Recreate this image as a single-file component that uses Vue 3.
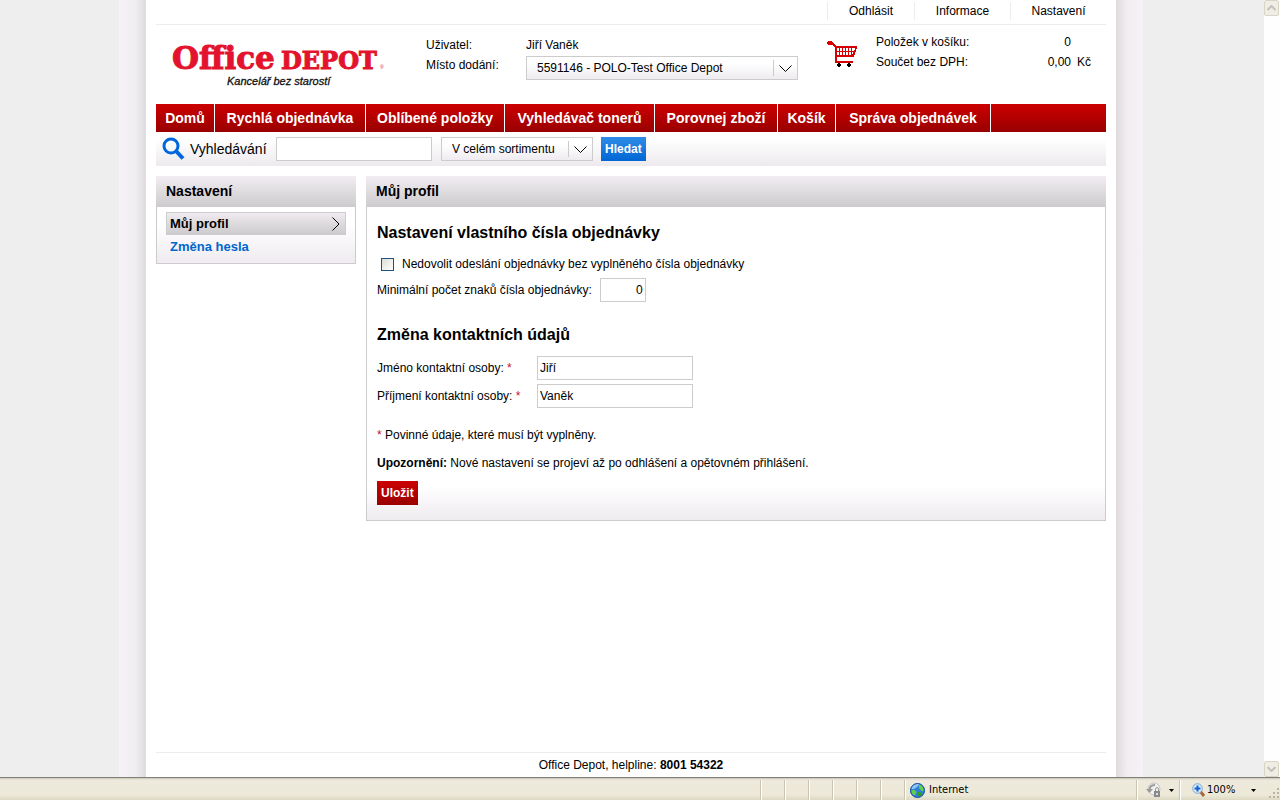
<script setup>
import { ref } from 'vue'

const topLinks = ['Odhlásit', 'Informace', 'Nastavení']
const menu = [
  'Domů',
  'Rychlá objednávka',
  'Oblíbené položky',
  'Vyhledávač tonerů',
  'Porovnej zboží',
  'Košík',
  'Správa objednávek',
]
const place = ref('5591146 - POLO-Test Office Depot')
const scope = ref('V celém sortimentu')
const query = ref('')
const strict = ref(false)
const minChars = ref('0')
const firstName = ref('Jiří')
const lastName = ref('Vaněk')
</script>

<template>
  <div class="window">
    <div class="viewport">
      <div class="page">
        <div class="shade left"></div>
        <div class="sheet">
          <nav class="top-links">
            <a v-for="l in topLinks" :key="l" href="#">{{ l }}</a>
          </nav>

          <header class="header">
            <a href="#" class="logo" aria-label="Office Depot">
              <svg width="230" height="56" viewBox="0 -8 230 56">
                <g class="brand">
                  <text x="6" y="26" font-size="31">Office</text>
                  <text x="115" y="26" font-size="24">DEPOT</text>
                </g>
                <text class="reg" x="214" y="26" font-size="5">®</text>
                <text class="motto" x="61" y="42" font-size="11">Kancelář bez starostí</text>
              </svg>
            </a>
            <div class="account">
              <span>Uživatel:</span>
              <span>Jiří Vaněk</span>
              <label for="place">Místo dodání:</label>
              <div class="drop">
                <select id="place" v-model="place">
                  <option>5591146 - POLO-Test Office Depot</option>
                </select>
                <svg class="chev" width="13" height="8" viewBox="0 0 13 8"><path d="M.5.5 6.5 6.5 12.5.5" /></svg>
              </div>
            </div>
            <svg class="cart" width="31" height="28" viewBox="0 0 31 28">
              <path fill="#d60000" d="M0 2h1V1h4v1h1v1h1v1h1v1h1v1h21v3h-1v3h-1v3h-1v2H10v4h16v2H8V7H7V6H6V5H1V4H0z" />
              <path fill="#fff" d="M10 8h2v3h-2zM13 8h2v3h-2zM16 8h2v3h-2zM19 8h2v3h-2zM22 8h2v3h-2zM25 8h3v2h-1v1h-2zM10 12h2v3h-2zM13 12h2v3h-2zM16 12h2v3h-2zM19 12h2v3h-2zM22 12h2v3h-2zM25 12h1v2h-1z" />
              <path fill="#000" d="M11 23h2v1h1v2h-1v1h-2v-1h-1v-2h1zM21 23h2v1h1v2h-1v1h-2v-1h-1v-2h1z" />
            </svg>
            <div class="totals">
              <span>Položek v košíku:</span><span class="num">0</span><span></span>
              <span>Součet bez DPH:</span><span class="num">0,00</span><span>Kč</span>
            </div>
          </header>

          <nav class="menu">
            <a v-for="m in menu" :key="m" href="#">{{ m }}</a>
          </nav>

          <form class="search" @submit.prevent>
            <svg class="lens" width="24" height="24" viewBox="0 0 24 24">
              <circle cx="9" cy="9" r="7" />
              <path d="M14 14 21 21.5" />
            </svg>
            <label for="query">Vyhledávání</label>
            <input id="query" v-model="query" type="text" class="field" />
            <div class="drop scope">
              <select v-model="scope" aria-label="Sortiment">
                <option>V celém sortimentu</option>
              </select>
              <svg class="chev" width="13" height="8" viewBox="0 0 13 8"><path d="M.5.5 6.5 6.5 12.5.5" /></svg>
            </div>
            <button type="submit" class="btn blue">Hledat</button>
          </form>

          <div class="columns">
            <aside class="panel">
              <h2>Nastavení</h2>
              <ul class="side">
                <li>
                  <a href="#" class="active">Můj profil
                    <svg width="8" height="14" viewBox="0 0 8 14"><path d="M.5.5 7 7 .5 13.5" /></svg>
                  </a>
                </li>
                <li><a href="#">Změna hesla</a></li>
              </ul>
            </aside>

            <main class="panel">
              <h2>Můj profil</h2>
              <form class="profile" @submit.prevent>
                <h3>Nastavení vlastního čísla objednávky</h3>
                <label class="check">
                  <input v-model="strict" type="checkbox" />
                  Nedovolit odeslání objednávky bez vyplněného čísla objednávky
                </label>
                <div class="line">
                  <label for="min">Minimální počet znaků čísla objednávky:</label>
                  <input id="min" v-model="minChars" type="text" class="field short" />
                </div>
                <h3 class="second">Změna kontaktních údajů</h3>
                <div class="line pair">
                  <label for="first">Jméno kontaktní osoby: <i>*</i></label>
                  <input id="first" v-model="firstName" type="text" class="field" />
                </div>
                <div class="line pair">
                  <label for="last">Příjmení kontaktní osoby: <i>*</i></label>
                  <input id="last" v-model="lastName" type="text" class="field" />
                </div>
                <p class="note"><i>*</i> Povinné údaje, které musí být vyplněny.</p>
                <p><b>Upozornění:</b> Nové nastavení se projeví až po odhlášení a opětovném přihlášení.</p>
                <button type="submit" class="btn red">Uložit</button>
              </form>
            </main>
          </div>

          <footer class="footer">Office Depot, helpline: <b>8001 54322</b></footer>
        </div>
        <div class="shade right"></div>
      </div>

      <div class="scrollbar">
        <button type="button" aria-label="Nahoru">
          <svg width="9" height="6" viewBox="0 0 9 6"><path d="M.5 5 4.5 1 8.5 5" /></svg>
        </button>
        <button type="button" aria-label="Dolů">
          <svg width="9" height="6" viewBox="0 0 9 6"><path d="M.5 1 4.5 5 8.5 1" /></svg>
        </button>
      </div>
    </div>

    <div class="status">
      <span v-for="n in 6" :key="n" class="slot"></span>
      <span class="cell zone">
        <svg width="15" height="15" viewBox="0 0 15 15">
          <circle cx="7.500" cy="7.500" r="7.200" fill="#2f7fd6" />
          <path fill="#8cc6f4" d="M3 2.500C5 .8 8 .5 9.500 1.200L7 4 4 6 1 6z" />
          <path fill="#5fd04a" d="M9 1.500l3 1 2 4-1 2-2-1-2-2.500zM1.500 7l3 0 2 2-1 2.500-2 1-2-3z" />
          <path fill="#2f9e2a" d="M8 9l4 .5.500 2-3 2.500-2-2z" />
          <circle cx="7.500" cy="7.500" r="7" fill="none" stroke="#1b4f9c" />
        </svg>
        Internet
      </span>
      <span class="cell lock">
        <svg width="16" height="16" viewBox="0 0 16 16">
          <circle cx="8" cy="7" r="6" fill="#f0f0f0" stroke="#c4c4c4" />
          <path d="M3.500 8C3.500 5 5 3 9 3" fill="none" stroke="#9a9a9a" stroke-width="2" />
          <path fill="#9a9a9a" d="M0 7h7l-3.500 4z" />
          <path d="M9.500 9V7.500c0-2.500 3-2.500 3 0V9" fill="none" stroke="#888" />
          <path fill="#8a8a8a" d="M8 9h6v6H8z" />
          <path fill="#ddd" d="M10 11h2v2h-2z" />
        </svg>
        <svg width="5" height="3" viewBox="0 0 5 3"><path d="M0 0h5L2.500 3z" /></svg>
      </span>
      <span class="cell zoom">
        <svg width="13" height="14" viewBox="0 0 13 14">
          <path d="M8 8 12 13" stroke="#a8683c" stroke-width="3" />
          <circle cx="5.500" cy="5.500" r="4.800" fill="#d9ecfb" stroke="#7fa6cf" />
          <path d="M5.500 2.500v6M2.500 5.500h6" stroke="#1560d0" stroke-width="2" />
        </svg>
        100%
        <svg class="last" width="5" height="3" viewBox="0 0 5 3"><path d="M0 0h5L2.500 3z" /></svg>
      </span>
      <svg class="grip" width="12" height="12" viewBox="0 0 12 12">
        <path fill="#b8b4a2" d="M9 0h2v2H9zM5 4h2v2H5zM9 4h2v2H9zM1 8h2v2H1zM5 8h2v2H5zM9 8h2v2H9z" />
      </svg>
    </div>
  </div>
</template>

<style>
body {
  margin: 0;
}
</style>

<style scoped>
* {
  box-sizing: border-box;
}
.window {
  display: flex;
  flex-direction: column;
  min-height: 100vh;
  font: 12px/20px "Liberation Sans", Arial, sans-serif;
  color: #000;
}
a {
  color: inherit;
  text-decoration: none;
}
i {
  color: #c8102e;
  font-style: normal;
}
h2,
h3,
p,
ul {
  margin: 0;
  padding: 0;
}
input,
select,
button {
  font: inherit;
  color: inherit;
}
.viewport {
  flex: 1;
  display: flex;
  background: #eee;
}
.page {
  flex: 1;
  display: flex;
  justify-content: center;
}
.shade {
  width: 27px;
}
.shade.left {
  background: linear-gradient(to right, #f5f1f5, #f1eef2 60%, #dedade);
}
.shade.right {
  background: linear-gradient(to left, #f5f1f5, #f1eef2 60%, #dedade);
}
.sheet {
  flex: 0 1 970px;
  display: flex;
  flex-direction: column;
  padding: 0 10px;
  background: #fff;
}
.top-links {
  display: grid;
  grid-template-columns: 87px 96px 96px;
  justify-content: end;
  padding: 2px 0 4px;
  border-bottom: 1px solid #ececec;
}
.top-links a {
  border-left: 1px solid #ececec;
  line-height: 18px;
  text-align: center;
}
.header {
  display: flex;
  align-items: flex-start;
  height: 79px;
  padding-top: 10px;
}
.logo {
  width: 270px;
  padding-left: 10px;
}
.brand {
  font-family: "DejaVu Serif", serif;
  font-weight: bold;
  fill: #e3132d;
  stroke: #e3132d;
  stroke-width: 1px;
}
.reg {
  fill: #e3132d;
}
.motto {
  font-style: italic;
  fill: #111;
  stroke: #111;
  stroke-width: 0.3px;
}
.account {
  display: grid;
  grid-template-columns: 100px 272px;
  align-items: start;
}
.drop {
  position: relative;
  height: 24px;
  margin-top: 1px;
  border: 1px solid #ccc;
  background: linear-gradient(#fff 30%, #efebf0);
}
.drop select {
  appearance: none;
  width: 100%;
  height: 22px;
  padding: 0 30px 0 10px;
  border: 0;
  background: none;
}
.chev {
  position: absolute;
  top: 8px;
  right: 5px;
}
.drop::after {
  content: "";
  position: absolute;
  top: 3px;
  right: 23px;
  height: 16px;
  border-left: 1px solid #ccc;
}
.chev path,
.side path {
  fill: none;
  stroke: #000;
}
.cart {
  margin: 5px 18px 0 29px;
}
.totals {
  display: grid;
  grid-template-columns: 130px 59px auto;
  column-gap: 6px;
  margin-top: -3px;
}
.num {
  text-align: right;
}
.menu {
  display: grid;
  grid-template-columns: 59px 151px 139px 150px 123px 58px 155px;
  background: linear-gradient(#c00, #900);
}
.menu a {
  border-right: 1px solid #fff;
  font-size: 14px;
  font-weight: bold;
  line-height: 28px;
  color: #fff;
  text-align: center;
  white-space: nowrap;
}
.search {
  display: flex;
  align-items: center;
  height: 34px;
  padding-left: 6px;
  background: linear-gradient(#fff 20%, #edeaee);
}
.search label {
  width: 86px;
  margin-left: 4px;
  font-size: 14px;
}
.lens {
  fill: none;
  stroke: #06d;
  stroke-width: 3px;
}
.lens path {
  stroke-width: 4px;
}
.field {
  width: 156px;
  height: 24px;
  padding: 0 2px;
  border: 1px solid #ccc;
  border-radius: 0;
  background: #fff;
}
.search .drop {
  width: 152px;
  margin: 0 8px 0 9px;
}
.btn {
  height: 24px;
  padding: 0 4px;
  border: 0;
  font-weight: bold;
  color: #fff;
}
.blue {
  background: linear-gradient(#2f8ce8, #0066d4);
}
.red {
  background: linear-gradient(#c00, #900);
}
.columns {
  display: grid;
  grid-template-columns: 200px 1fr;
  gap: 10px;
  align-items: start;
  margin-top: 10px;
}
.panel {
  border: 1px solid #ccc;
  border-top: 0;
}
.panel h2 {
  margin: 0 -1px;
  padding-left: 10px;
  background: linear-gradient(#f1edf2, #cdcbcd);
  font-size: 14px;
  line-height: 31px;
}
.side {
  padding: 5px 9px;
  list-style: none;
  background: linear-gradient(#fff 30%, #efebf0);
}
.side a {
  display: flex;
  align-items: center;
  justify-content: space-between;
  height: 23px;
  padding: 0 4px;
  font-size: 13px;
  font-weight: bold;
  color: #06c;
}
.side .active {
  border: 1px solid #ccc;
  padding: 0 5px 0 3px;
  background: linear-gradient(#efebf0, #cdcbcd);
  color: #000;
}
.profile {
  padding: 16px 10px 15px;
  background: linear-gradient(to top, #efebf0, #fff 34px);
}
.profile h3 {
  font-size: 16px;
  line-height: 20px;
}
.check {
  display: flex;
  align-items: center;
  margin-top: 11px;
}
.check input {
  appearance: none;
  width: 13px;
  height: 13px;
  margin: 0 8px 0 4px;
  border: 1px solid #1c5180;
  background: linear-gradient(135deg, #dcdcd7, #fff);
}
.line {
  display: flex;
  align-items: center;
  gap: 8px;
  margin-top: 4px;
}
.short {
  width: 46px;
  text-align: right;
}
.profile .second {
  margin: 23px 0 11px;
}
.pair {
  gap: 0;
}
.pair label {
  width: 160px;
}
.profile p {
  margin-bottom: 8px;
}
.profile .note {
  margin-top: 17px;
}
.footer {
  margin-top: auto;
  padding: 2px 0;
  border-top: 1px solid #ececec;
  text-align: center;
}
.scrollbar {
  display: flex;
  flex-direction: column;
  justify-content: space-between;
  width: 18px;
  border-left: 2px solid #eee;
  background: #fefefe;
}
.scrollbar button {
  display: grid;
  place-items: center;
  width: 15px;
  height: 16px;
  padding: 0;
  border: 1px solid #d8d5c4;
  border-radius: 2px;
  background: #efeee6;
}
.scrollbar path {
  fill: none;
  stroke: #c4c2b8;
  stroke-width: 2px;
}
.status {
  display: flex;
  align-items: stretch;
  justify-content: flex-end;
  height: 23px;
  padding-top: 3px;
  background: linear-gradient(#808078 1px, #c9c6b8 1px, #edeadd 3px, #ece9d8 18px, #dcd8c3);
  font: 11px/20px "DejaVu Sans Condensed", "Liberation Sans", sans-serif;
}
.slot,
.cell {
  border-left: 1px solid #c9c5b2;
  box-shadow: inset 1px 0 #fff;
}
.slot {
  width: 24px;
}
.cell {
  display: flex;
  align-items: center;
}
.zone {
  width: 232px;
  gap: 4px;
  padding-left: 5px;
}
.lock {
  width: 43px;
  gap: 7px;
  padding-left: 9px;
}
.zoom {
  width: 89px;
  gap: 2px;
  padding-left: 12px;
}
.last {
  margin-left: 14px;
}
.grip {
  align-self: flex-end;
}
</style>
